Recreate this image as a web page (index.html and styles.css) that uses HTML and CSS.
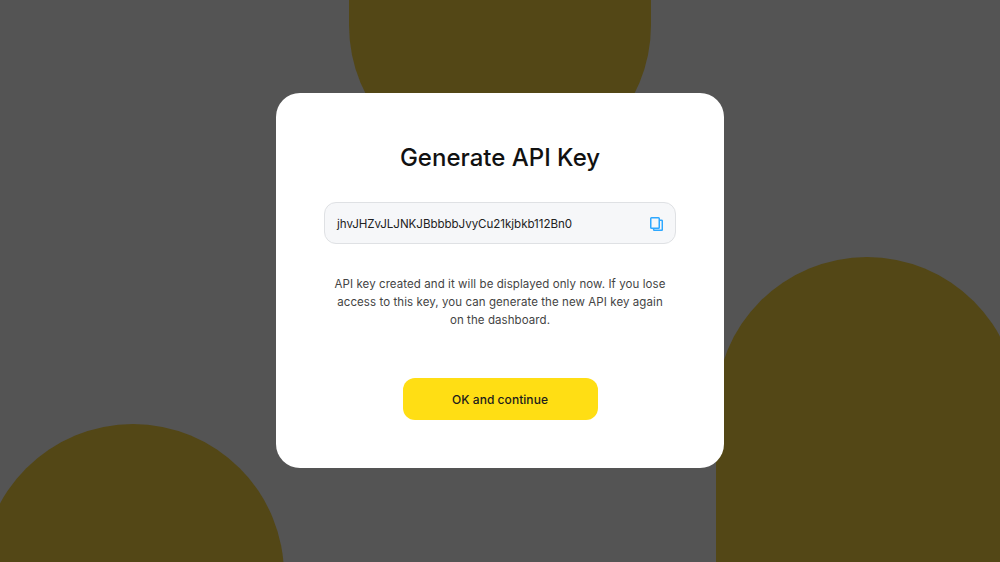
FILE: index.html
```html
<!DOCTYPE html>
<html lang="en">
<head>
    <meta charset="UTF-8">
    <meta name="viewport" content="width=device-width, initial-scale=1.0">
    <title>Generate API Key</title>
    <link rel="stylesheet" href="styles.css">
</head>
<body>
    <div class="backdrop">
        <div class="blob blob-top"></div>
        <div class="blob blob-left"></div>
        <div class="blob blob-right"></div>
    </div>
    <div class="modal">
        <h2>Generate API Key</h2>
        <div class="key-field">
            <span class="key-value">jhvJHZvJLJNKJBbbbbJvyCu21kjbkb112Bn0</span>
            <svg class="copy-icon" width="13" height="14" viewBox="0 0 13 14" fill="none" stroke="#2ea8ff" stroke-width="1.5">
                <rect x="0.75" y="0.75" width="8.5" height="10.5" rx="0.8"></rect>
                <path d="M9.6 3.2h1.9a.8.8 0 0 1 .8.8v8.5a.8.8 0 0 1-.8.8H4.4a.8.8 0 0 1-.8-.8v-1"></path>
            </svg>
        </div>
        <p class="note">API key created and it will be displayed only now. If you lose access to this key, you can generate the new API key again on the dashboard.</p>
        <button type="button" class="continue">OK and continue</button>
    </div>
</body>
</html>
```

FILE: styles.css
```css
html, body {
    height: 100%;
}
body {
    font-family: Inter, "Liberation Sans", sans-serif;
    background-color: #545454;
    display: flex;
    justify-content: center;
    align-items: center;
    margin: 0;
    position: relative;
    overflow: hidden;
}
.backdrop {
    position: absolute;
    top: 0;
    right: 0;
    bottom: 0;
    left: 0;
    overflow: hidden;
}
.blob {
    position: absolute;
    width: 302px;
    background-color: #534716;
}
.blob-top {
    left: 349px;
    top: -100px;
    height: 276px;
    border-radius: 0 0 151px 151px;
}
.blob-left {
    left: -18px;
    top: 424px;
    height: 300px;
    border-radius: 151px 151px 0 0;
}
.blob-right {
    left: 716px;
    top: 257px;
    height: 320px;
    border-radius: 151px 151px 0 0;
}
.modal {
    position: relative;
    box-sizing: border-box;
    width: 448px;
    height: 375px;
    margin-bottom: 1px;
    padding: 49px 48px 0;
    background-color: #fff;
    border-radius: 24px;
    display: flex;
    flex-direction: column;
    align-items: center;
}
.modal h2 {
    margin: 0 0 28px;
    font-size: 24px;
    line-height: 32px;
    font-weight: 550;
    letter-spacing: 0;
    color: #111;
}
.key-field {
    box-sizing: border-box;
    width: 352px;
    height: 42px;
    padding: 1px 12px 0;
    background-color: #f6f7f9;
    border: 1px solid #dfe1e4;
    border-radius: 12px;
    display: flex;
    justify-content: space-between;
    align-items: center;
}
.key-value {
    font-size: 11.6px;
    color: #222;
    letter-spacing: -0.05px;
}
.copy-icon {
    display: block;
}
.note {
    max-width: 336px;
    margin: 31px 0 0;
    font-size: 11.5px;
    line-height: 18px;
    text-align: center;
    color: #444;
    letter-spacing: 0.08px;
}
.continue {
    margin-top: 49px;
    width: 195px;
    height: 42px;
    background-color: #ffde14;
    border: none;
    border-radius: 12px;
    font-family: inherit;
    font-size: 12px;
    font-weight: 500;
    color: #1c1c1c;
    letter-spacing: 0.05px;
}
```
